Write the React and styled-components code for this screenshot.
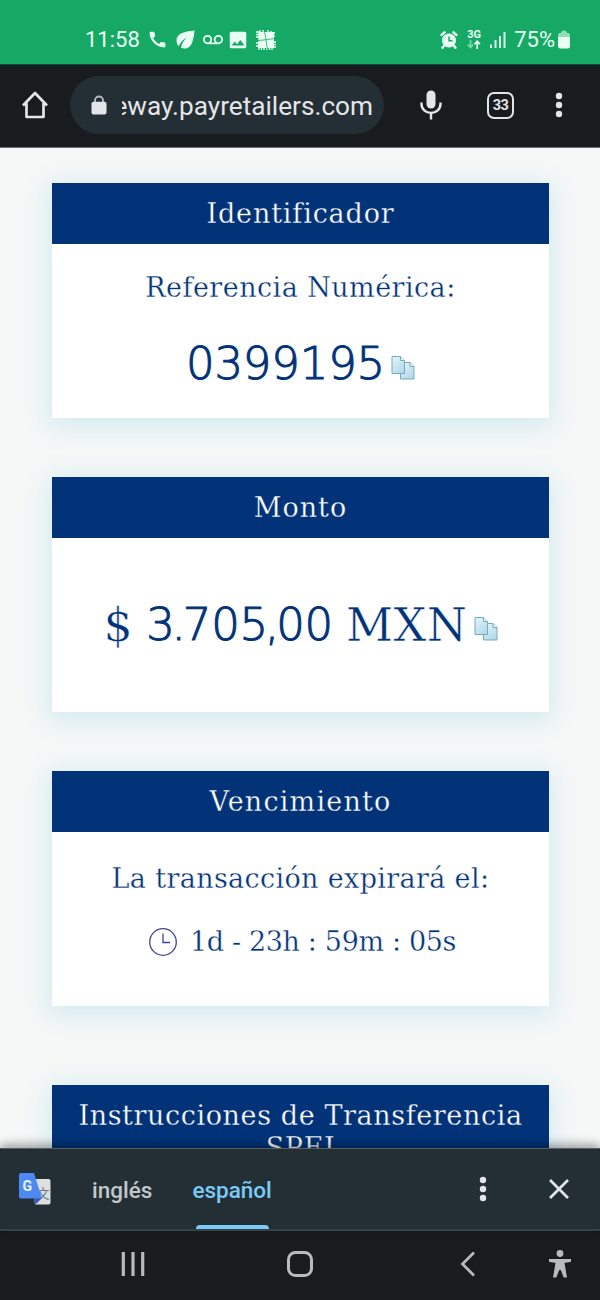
import styled, { createGlobalStyle } from "styled-components";
import { MdCall, MdEco, MdVoicemail, MdPhoto } from "react-icons/md";

export default function App() {
  return (
    <>
      <GlobalStyle />
      <Screen>
        <StatusBar>
          <StatusGroup>
            <Time>11:58</Time>
            <MdCall size={21} />
            <MdEco size={27} />
            <MdVoicemail size={20} />
            <MdPhoto size={22} />
            <GridIcon />
          </StatusGroup>
          <StatusGroup $gap="8px">
            <AlarmIcon />
            <NetworkIcon />
            <SignalIcon />
            <Percent>75%</Percent>
            <BatteryIcon />
          </StatusGroup>
        </StatusBar>

        <Toolbar>
          <HomeIcon />
          <AddressBar>
            <LockIcon />
            <Url>
              <span>eway.payretailers.com</span>
            </Url>
          </AddressBar>
          <MicIcon />
          <TabCount>33</TabCount>
          <DotsIcon />
        </Toolbar>

        <Page>
          <Card>
            <CardTitle $spacing="0.85px">Identificador</CardTitle>
            <CardBody>
              <Label $top="26px" $spacing="0.45px">
                Referencia Numérica:
              </Label>
              <Amount $top="30px">
                <Digits>0399195</Digits>
                <CopyIcon />
              </Amount>
            </CardBody>
          </Card>

          <Card>
            <CardTitle $spacing="1px">Monto</CardTitle>
            <CardBody>
              <Amount $top="59px">
                <Letters>$</Letters>
                <Digits $left="13px">
                  <Tight>3.</Tight>70<Tight>5,</Tight>00
                </Digits>
                <Letters $left="13px">MXN</Letters>
                <CopyIcon />
              </Amount>
            </CardBody>
          </Card>

          <Card $gap="79px">
            <CardTitle $spacing="1.2px">Vencimiento</CardTitle>
            <CardBody>
              <Label $top="29px" $spacing="0.35px">
                La transacción expirará el:
              </Label>
              <Countdown>
                <ClockIcon />
                <Label as="span" $spacing="-0.35px">
                  1d - 23h : 59m : 05s
                </Label>
              </Countdown>
            </CardBody>
          </Card>

          <Card>
            <CardTitle $spacing="0.6px">
              Instrucciones de Transferencia
              <br />
              SPEI
            </CardTitle>
          </Card>
        </Page>

        <TranslateBar>
          <TranslateIcon />
          <Language>inglés</Language>
          <Language $active>español</Language>
          <BarActions>
            <DotsIcon />
            <CloseIcon />
          </BarActions>
        </TranslateBar>

        <NavBar>
          <RecentsIcon />
          <NavHomeIcon />
          <BackIcon />
          <PersonIcon />
        </NavBar>
      </Screen>
    </>
  );
}

const GridIcon = () => (
  <svg width="23" height="20" viewBox="-3 0 23 20">
    <path d="M2.500 2h15.500v16H2z" fill="#eafff3" />
    <path
      d="M0 2h4M0 4.500h4M0 7h4M16 12h4M16 14.500h4M16 17h4M4 0v4M7 0v3M11 17v3M13.500 17v3M16 17v3M3 17v3M5.500 17v3M8 17v3M16 3h3M16 6h3M0 13h3M0 16h3M12 0v4M15 1v3"
      stroke="#eafff3"
      strokeWidth="1.300"
    />
    <path d="M8.500 1l3 18M1 10.800l18-2.300" stroke="#16a966" strokeWidth="0.800" />
  </svg>
);

const AlarmIcon = () => (
  <svg width="18" height="18" viewBox="0 0 18 18">
    <circle cx="9" cy="9.500" r="7" fill="#eafff3" />
    <path
      d="M1.500 4l3-2.700M16.500 4l-3-2.700M3.800 15l-1.300 1.700M14.200 15l1.300 1.700"
      stroke="#eafff3"
      strokeWidth="2.400"
      strokeLinecap="round"
    />
    <path d="M9 5.500v4.300h3.500" fill="none" stroke="#14a963" strokeWidth="1.500" />
  </svg>
);

const NetworkIcon = () => (
  <Network>
    <span>3G</span>
    <svg width="14" height="9" viewBox="0 0 14 9" fill="none" strokeWidth="1.700">
      <path d="M3.500 0v7M.8 4.500l2.700 3 2.700-3" stroke="#7bd8a8" />
      <path d="M10.200 9V1.500M7.500 4.200l2.700-3 2.700 3" stroke="#eafff3" />
    </svg>
  </Network>
);

const SignalIcon = () => (
  <svg width="16" height="18" viewBox="0 0 16 18" fill="#d8f9e7">
    <rect x="0" y="13.500" width="2" height="3.500" />
    <rect x="4.500" y="9" width="2" height="8" />
    <rect x="9" y="5" width="2" height="12" />
    <rect x="13.500" y="1" width="2" height="16" />
  </svg>
);

const BatteryIcon = () => (
  <svg width="12" height="19" viewBox="0 0 12 19">
    <path d="M3 3q0-2.500 3-2.500T9 3h1q2 0 2 2v3H0V5q0-2 2-2z" fill="#8edfb4" />
    <path d="M0 7h12v9q0 2.500-2.500 2.500h-7Q0 18.500 0 16z" fill="#eafff3" />
  </svg>
);

const HomeIcon = () => (
  <svg width="28" height="28" viewBox="0 0 28 28" fill="none" stroke="#e3e5e8">
    <path
      d="M2 14.500L14 2l12 12.500M5.500 12v14h17V12"
      strokeWidth="2.700"
      strokeLinejoin="round"
    />
  </svg>
);

const LockIcon = () => (
  <svg width="16" height="20" viewBox="0 0 16 20">
    <path d="M4 8V5.500a4 4 0 0 1 8 0V8" fill="none" stroke="#b9bec2" strokeWidth="1.800" />
    <rect x="0.500" y="6.700" width="15" height="12.800" rx="2" fill="#e3e5e8" />
  </svg>
);

const MicIcon = () => (
  <svg width="22" height="30" viewBox="0 0 22 30">
    <rect x="6.500" y="0.500" width="9" height="18" rx="4.500" fill="#e3e5e8" />
    <path
      d="M1.500 12.500v1.500a9.500 9 0 0 0 19 0v-1.500M11 23v6.500"
      fill="none"
      stroke="#e3e5e8"
      strokeWidth="2.400"
    />
  </svg>
);

const DotsIcon = () => (
  <svg width="8" height="26" viewBox="0 0 8 26" fill="#e3e5e8">
    <circle cx="4" cy="4" r="3.200" />
    <circle cx="4" cy="13" r="3.200" />
    <circle cx="4" cy="22" r="3.200" />
  </svg>
);

const CopyIcon = () => (
  <svg width="24" height="24" viewBox="0 0 24 24" stroke="#78aabd" strokeWidth="1">
    <defs>
      <linearGradient id="sheet" x1="0" y1="0" x2="0.6" y2="1">
        <stop offset="0" stopColor="#e6f5fb" />
        <stop offset="1" stopColor="#b4dbea" />
      </linearGradient>
    </defs>
    <path d="M1 0.500h8.500l4 4v13H1z" fill="url(#sheet)" />
    <path d="M9.500 0.500v4h4" fill="#e5f5fb" />
    <path d="M13.500 6.500h5.500l4 4v12.500H9.500v-5.500h4z" fill="url(#sheet)" />
    <path d="M19 6.500v4h4" fill="#e5f5fb" />
  </svg>
);

const ClockIcon = () => (
  <svg width="30" height="30" viewBox="0 0 30 30" fill="none" stroke="#3c4590">
    <circle cx="15" cy="15" r="13.300" strokeWidth="1.300" />
    <path d="M15 6.500v9h7" strokeWidth="1.300" />
  </svg>
);

const TranslateIcon = () => (
  <svg width="34" height="34" viewBox="0 0 34 34">
    <path d="M14 7h16.500q2 0 2 2v21.500q0 2-2 2H17z" fill="#dedfe1" />
    <text x="18.500" y="25.500" fontSize="13" fontFamily="Noto Sans CJK SC, sans-serif" fill="#6a7d84">
      文
    </text>
    <path d="M16 26h8L17.500 32.500z" fill="#3457b8" />
    <path d="M3 1h13l8 25.500H3q-2 0-2-2V3q0-2 2-2z" fill="#4c8af2" />
    <text x="4.500" y="18.500" fontSize="14" fontWeight="700" fontFamily="Roboto, sans-serif" fill="#eaf2ff">
      G
    </text>
  </svg>
);

const CloseIcon = () => (
  <svg width="22" height="22" viewBox="0 0 22 22" stroke="#e3e5e8" strokeWidth="2.700">
    <path d="M2 2l18 18M20 2L2 20" />
  </svg>
);

const RecentsIcon = () => (
  <svg width="24" height="26" viewBox="0 0 24 26" stroke="#b9babb" strokeWidth="3.200">
    <path d="M2.300 1v24M12 1v24M21.700 1v24" />
  </svg>
);

const NavHomeIcon = () => (
  <svg width="28" height="28" viewBox="0 0 28 28" fill="none" stroke="#b9babb">
    <rect x="2.500" y="2.500" width="23" height="23" rx="7" strokeWidth="3" />
  </svg>
);

const BackIcon = () => (
  <svg width="16" height="26" viewBox="0 0 16 26" fill="none" stroke="#b9babb">
    <path d="M14 1.500L2.500 13 14 24.500" strokeWidth="2.700" />
  </svg>
);

const PersonIcon = () => (
  <svg width="24" height="28" viewBox="0 0 24 28" fill="#b9babb">
    <circle cx="12" cy="3.500" r="3.400" />
    <path d="M1 9h22v2.700l-6.500 1.300 2.500 14.500h-3.300L12.700 20h-1.400L8.300 27.500H5L7.500 13 1 11.700z" />
  </svg>
);

const GlobalStyle = createGlobalStyle`
  * {
    box-sizing: border-box;
  }
  body {
    margin: 0;
    font-family: Roboto, sans-serif;
  }
  svg {
    display: block;
    flex: none;
  }
`;

const Screen = styled.div`
  display: flex;
  flex-direction: column;
  width: 600px;
  height: 1300px;
  overflow: hidden;
`;

const StatusBar = styled.div`
  display: flex;
  justify-content: space-between;
  align-items: center;
  height: 65px;
  padding: 15px 30px 0 85px;
  background: #16a966;
  border-bottom: 1px solid #144c38;
  color: #eafff3;
`;

const StatusGroup = styled.div`
  display: flex;
  align-items: center;
  gap: ${({ $gap }) => $gap || "4px"};
`;

const Time = styled.span`
  width: 58px;
  font-size: 22px;
`;

const Percent = styled.span`
  margin-right: -5px;
  font-size: 22px;
`;

const Network = styled.div`
  display: flex;
  flex-direction: column;
  align-items: center;
  margin: 0 1px;
  font-size: 11px;
  font-weight: 700;
  line-height: 10px;
`;

const Toolbar = styled.div`
  display: flex;
  align-items: center;
  height: 83px;
  padding: 0 0 2px 21px;
  background: #191c1f;
  border-bottom: 1px solid #6c6e70;
  color: #e3e5e8;

  > svg:last-child {
    margin-left: 41px;
  }
`;

const AddressBar = styled.div`
  display: flex;
  align-items: center;
  width: 314px;
  height: 58px;
  margin: 0 36px 0 21px;
  padding: 0 11px 0 21px;
  border-radius: 29px;
  background: #232f35;
`;

const Url = styled.div`
  display: flex;
  justify-content: flex-end;
  width: 251px;
  margin: 2px 0 0 15px;
  overflow: hidden;
  font-size: 26.200px;
  line-height: 36px;
  white-space: nowrap;
`;

const TabCount = styled.div`
  width: 27px;
  height: 27px;
  margin-left: 45px;
  border: 2.500px solid #e3e5e8;
  border-radius: 7px;
  font-size: 14.500px;
  font-weight: 700;
  line-height: 23px;
  letter-spacing: -0.600px;
  text-align: center;
`;

const Page = styled.div`
  height: 1000px;
  padding: 35px 51px 0 52px;
  overflow: hidden;
  background: #f6f7f7;
`;

const Card = styled.div`
  margin-bottom: ${({ $gap }) => $gap || "59px"};
  background: #fff;
  box-shadow: 0 5px 24px 4px #d3ebf0;
`;

const CardTitle = styled.h2`
  margin: 0;
  padding: 15px 0 14px;
  background: #023379;
  color: #fff;
  font-family: "DejaVu Serif", serif;
  font-size: 27px;
  font-weight: 400;
  line-height: 32px;
  letter-spacing: ${({ $spacing }) => $spacing};
  text-align: center;
  white-space: nowrap;
  -webkit-text-stroke: 0.300px #023379;
`;

const CardBody = styled.div`
  display: flex;
  flex-direction: column;
  align-items: center;
  height: 174px;
`;

const Label = styled.p`
  margin: ${({ $top }) => $top || "0"} 0 0;
  color: #023379;
  font-family: "DejaVu Serif", serif;
  font-size: 27px;
  line-height: 36px;
  letter-spacing: ${({ $spacing }) => $spacing};
  white-space: nowrap;
  -webkit-text-stroke: 0.300px #fff;
`;

const Amount = styled.div`
  display: flex;
  align-items: center;
  margin-top: ${({ $top }) => $top};
  color: #023379;
  font-size: 45px;
  line-height: 56px;

  svg {
    margin: 7px 0 0 6px;
  }
`;

const Digits = styled.span`
  margin-left: ${({ $left }) => $left || "0"};
  font-family: "DejaVu Sans", sans-serif;
  font-weight: 200;
  letter-spacing: -0.200px;
  -webkit-text-stroke: 1px #023379;
`;

const Tight = styled.span`
  letter-spacing: -3.200px;
`;

const Letters = styled.span`
  margin-left: ${({ $left }) => $left || "0"};
  font-family: "DejaVu Serif", serif;
  font-size: 46px;
  letter-spacing: 0.500px;
  -webkit-text-stroke: 0.500px #fff;
`;

const Countdown = styled.div`
  display: flex;
  align-items: center;
  gap: 12px;
  margin-top: 27px;
  padding-left: 3px;
`;

const TranslateBar = styled.div`
  position: relative;
  display: flex;
  align-items: center;
  height: 83px;
  padding: 0 30px 0 18px;
  background: #232f35;
  border-top: 1px solid #555e60;
  border-bottom: 2px solid #364148;
  box-shadow: 0 -3px 10px rgba(0, 0, 0, 0.4);
`;

const Language = styled.div`
  display: flex;
  justify-content: center;
  align-items: center;
  height: 80px;
  margin-left: 40px;
  padding-top: 2px;
  color: ${({ $active }) => ($active ? "#7acbf5" : "#c2c7cb")};
  font-size: 22.500px;
  font-weight: 500;

  ${({ $active }) =>
    $active &&
    `
    position: relative;

    &::after {
      content: "";
      position: absolute;
      bottom: 0;
      width: 73px;
      height: 4px;
      border-radius: 4px 4px 0 0;
      background: #7acbf5;
    }
  `}
`;

const BarActions = styled.div`
  display: flex;
  align-items: center;
  gap: 61px;
  margin-left: auto;
`;

const NavBar = styled.div`
  display: grid;
  grid-template-columns: 165px 174px 88px 24px;
  align-items: center;
  height: 69px;
  padding: 0 0 3px 121px;
  background: #191c1f;
`;
